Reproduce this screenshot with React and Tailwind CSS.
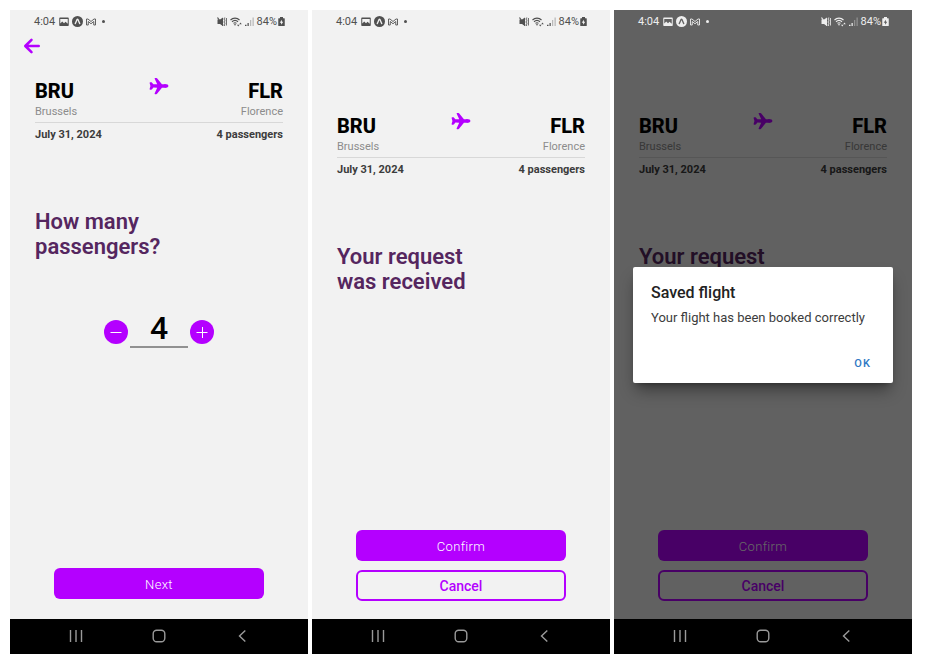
import { useState } from "react";
import { IoAirplane, IoArrowBack } from "react-icons/io5";

function ImageIcon() {
  return (
    <svg width="10" height="10" viewBox="0 0 20 20" fill="currentColor" aria-hidden="true">
      <path fillRule="evenodd" d="M2 1h16a1.500 1.500 0 0 1 1.500 1.500v14a1.500 1.500 0 0 1-1.500 1.500H2A1.500 1.500 0 0 1 .5 16.500v-14A1.500 1.500 0 0 1 2 1Zm.5 3v9l4-4 3.500 3.500L13 9.500l4.500 4V4Z" />
    </svg>
  );
}

function ExpoIcon({ inner }) {
  return (
    <svg width="11" height="11" viewBox="0 0 22 22" aria-hidden="true">
      <circle cx="11" cy="11" r="11" fill="currentColor" />
      <path d="M6.500 15C8.500 12.500 9.200 6.500 11 6.500S13.500 12.500 15.500 15" fill="none" stroke={inner} strokeWidth="2.600" strokeLinecap="round" />
    </svg>
  );
}

function MailIcon() {
  return (
    <svg width="10" height="8" viewBox="0 0 20 16" fill="none" stroke="currentColor" strokeWidth="1.800" strokeLinejoin="round" aria-hidden="true">
      <path d="M1 14V2h3l6 5 6-5h3v12h-3.500V7L10 11.500 4.500 7v7Z" />
    </svg>
  );
}

function MuteIcon() {
  return (
    <svg width="10" height="10" viewBox="0 0 20 20" aria-hidden="true">
      <path d="M1 5h5L12 1v17l-6-4H1Z" fill="currentColor" />
      <path d="M1 1 12 17.500" stroke="currentColor" strokeWidth="2.400" />
      <path d="m15.500 1-1.500 3 1.500 3-1.500 3 1.500 3-1.500 3 1.500 2M18.800 2v15" fill="none" stroke="currentColor" strokeWidth="1.800" />
    </svg>
  );
}

function WifiIcon() {
  return (
    <svg width="12" height="10" viewBox="0 0 24 20" fill="none" stroke="currentColor" aria-hidden="true">
      <path d="M1 6C6 1 14 1 19 6M4 9.500c3.500-3.300 8.500-3.300 12 0M7 12.800c2-1.800 4-1.800 6 0" strokeWidth="2.200" />
      <path d="M7.500 14.500h5L10 17.500Z" fill="currentColor" stroke="none" />
      <path d="M14 15.500h5L16.500 19ZM18.500 14.500h5L21 11Z" fill="currentColor" stroke="none" />
    </svg>
  );
}

function SignalIcon() {
  return (
    <svg width="9" height="10" viewBox="0 0 18 20" fill="currentColor" aria-hidden="true">
      <path d="M0 15.500h3V18H0ZM5 12h2.500v6H5Z" />
      <path d="M10 6h2.500v12H10ZM15 1h2.500v17H15Z" opacity="0.35" />
    </svg>
  );
}

function BatteryIcon({ inner }) {
  return (
    <svg width="7" height="10" viewBox="0 0 14 20" aria-hidden="true">
      <path d="M4 0h6v2.500h2.500a1 1 0 0 1 1 1V17a1 1 0 0 1-1 1h-11a1 1 0 0 1-1-1V3.500a1 1 0 0 1 1-1H4Z" fill="currentColor" />
      <path d="M7.500 5.500 3.500 11.500h2.500L6.500 15.500l4-6H8Z" fill={inner} />
    </svg>
  );
}

function StatusBar({ light }) {
  const inner = light ? "#616161" : "#f2f2f2";
  return (
    <div
      className={
        "relative z-10 flex h-6 items-center justify-between pr-[23px] pl-6 text-[11px] " +
        (light ? "text-[#eeeeee]" : "text-[#505050]")
      }
    >
      <div className="flex items-center">
        <span>4:04</span>
        <span className="ml-1 flex items-center gap-[3px] pb-px">
          <ImageIcon />
          <ExpoIcon inner={inner} />
          <MailIcon />
        </span>
        <span className="mb-px ml-1.5 h-[3px] w-[3px] rounded-full bg-current" />
      </div>
      <div className="flex items-center gap-[3px]">
        <MuteIcon />
        <WifiIcon />
        <SignalIcon />
        <span className="flex items-center gap-px">
          <span>84%</span>
          <BatteryIcon inner={inner} />
        </span>
      </div>
    </div>
  );
}

function NavBar() {
  const button = "flex items-center justify-center";
  return (
    <nav className="relative z-10 grid h-[35px] grid-cols-3 bg-black px-6 pb-0.5 text-[#9a9a9a]">
      <button type="button" aria-label="Recent apps" className={button}>
        <svg width="14" height="14" viewBox="0 0 14 14" stroke="currentColor" strokeWidth="1.400" aria-hidden="true">
          <path d="M1.500 1v12M7 1v12M12.500 1v12" />
        </svg>
      </button>
      <button type="button" aria-label="Home" className={button}>
        <svg width="14" height="14" viewBox="0 0 14 14" fill="none" stroke="currentColor" strokeWidth="1.400" aria-hidden="true">
          <rect x="1.200" y="1.200" width="11.600" height="11.600" rx="3.500" />
        </svg>
      </button>
      <button type="button" aria-label="Back" className={button}>
        <svg width="14" height="14" viewBox="0 0 14 14" fill="none" stroke="currentColor" strokeWidth="1.400" aria-hidden="true">
          <path d="M10.300 1.500 4.500 7l5.800 5.500" />
        </svg>
      </button>
    </nav>
  );
}

function FlightSummary({ passengers }) {
  return (
    <section>
      <div className="flex items-start justify-between">
        <div className="flex-1">
          <p className="text-xl/[26px] font-extrabold text-black">BRU</p>
          <p className="text-[11px]/[16px] text-[#8c8c8c]">Brussels</p>
        </div>
        <div className="flex h-4 items-center text-[#b400ff]">
          <IoAirplane size={20} />
        </div>
        <div className="flex-1 text-right">
          <p className="text-xl/[26px] font-extrabold text-black">FLR</p>
          <p className="text-[11px]/[16px] text-[#8c8c8c]">Florence</p>
        </div>
      </div>
      <div className="mt-0.5 flex justify-between border-t border-[#d8d8d8] pt-1 text-[11px]/[16px] font-bold text-[#3c3c3c]">
        <span>July 31, 2024</span>
        <span>{passengers} passengers</span>
      </div>
    </section>
  );
}

function Heading({ children }) {
  return <h1 className="mt-[66px] text-[22px]/[25px] font-semibold text-[#55265f]">{children}</h1>;
}

function PrimaryButton({ children }) {
  return (
    <button type="button" className="h-[31px] w-full rounded-md bg-[#b400ff] pt-0.5 text-[13px] font-light tracking-wide text-white">
      {children}
    </button>
  );
}

function Phone({ light, children, overlay }) {
  return (
    <div className="relative flex flex-col bg-[#f2f2f2]">
      <StatusBar light={light} />
      <main className="flex flex-1 flex-col">{children}</main>
      <NavBar />
      {overlay}
    </div>
  );
}

function PassengersScreen() {
  const [count, setCount] = useState(4);
  const round = "mb-1 flex size-6 items-center justify-center rounded-full bg-[#b400ff] text-white";
  return (
    <Phone>
      <div className="h-11 px-[11px] pt-px">
        <button type="button" aria-label="Go back" className="block text-[#b400ff]">
          <IoArrowBack size={22} className="[&_path]:stroke-[60px]" />
        </button>
      </div>
      <div className="px-[25px]">
        <FlightSummary passengers={count} />
        <Heading>
          How many
          <br />
          passengers?
        </Heading>
        <div className="mt-[50px] flex items-end justify-center gap-0.5">
          <button type="button" aria-label="Remove passenger" className={round} onClick={() => setCount(Math.max(1, count - 1))}>
            <svg width="12" height="12" viewBox="0 0 12 12" stroke="currentColor" aria-hidden="true">
              <path d="M0.500 6.500h11" />
            </svg>
          </button>
          <input
            type="text"
            inputMode="numeric"
            aria-label="Passengers"
            value={count}
            onChange={(e) => setCount(Number(e.target.value) || 1)}
            className="h-[39px] w-[58px] border-b-2 border-[#919191] bg-transparent text-center text-[32px]/[37px] font-medium text-black outline-none"
          />
          <button type="button" aria-label="Add passenger" className={round} onClick={() => setCount(count + 1)}>
            <svg width="12" height="12" viewBox="0 0 12 12" stroke="currentColor" aria-hidden="true">
              <path d="M0.500 6.500h11M6.500 1v11" />
            </svg>
          </button>
        </div>
      </div>
      <div className="mt-auto px-11 pb-5">
        <PrimaryButton>Next</PrimaryButton>
      </div>
    </Phone>
  );
}

function RequestScreen({ light, overlay }) {
  return (
    <Phone light={light} overlay={overlay}>
      <div className="px-[25px] pt-[79px]">
        <FlightSummary passengers={4} />
        <Heading>
          Your request
          <br />
          was received
        </Heading>
      </div>
      <div className="mt-auto flex flex-col gap-[9px] px-11 pb-[18px]">
        <PrimaryButton>Confirm</PrimaryButton>
        <button type="button" className="h-[31px] w-full rounded-md border-2 border-[#b400ff] text-sm font-medium text-[#b400ff]">
          Cancel
        </button>
      </div>
    </Phone>
  );
}

function SavedDialog() {
  return (
    <div className="absolute inset-0 flex items-center bg-black/60 px-[19px] pb-3.5">
      <div role="dialog" aria-labelledby="saved-title" className="w-full rounded-xs bg-white px-[18px] pt-4 pb-[9px] shadow-lg shadow-black/40">
        <h2 id="saved-title" className="text-base/[20px] font-medium text-[#222222]">Saved flight</h2>
        <p className="mt-1.5 text-[13px]/[18px] text-[#3c3c3c]">Your flight has been booked correctly</p>
        <div className="mt-[27px] flex justify-end pr-1">
          <button type="button" className="text-[11px]/[20px] font-medium tracking-widest text-[#2f78c4]">OK</button>
        </div>
      </div>
    </div>
  );
}

export default function App() {
  return (
    <div className="grid min-h-screen grid-cols-3 gap-1 bg-white pt-2.5 pr-[13px] pb-1 pl-2.5 font-[Roboto,sans-serif]">
      <PassengersScreen />
      <RequestScreen />
      <RequestScreen light overlay={<SavedDialog />} />
    </div>
  );
}
